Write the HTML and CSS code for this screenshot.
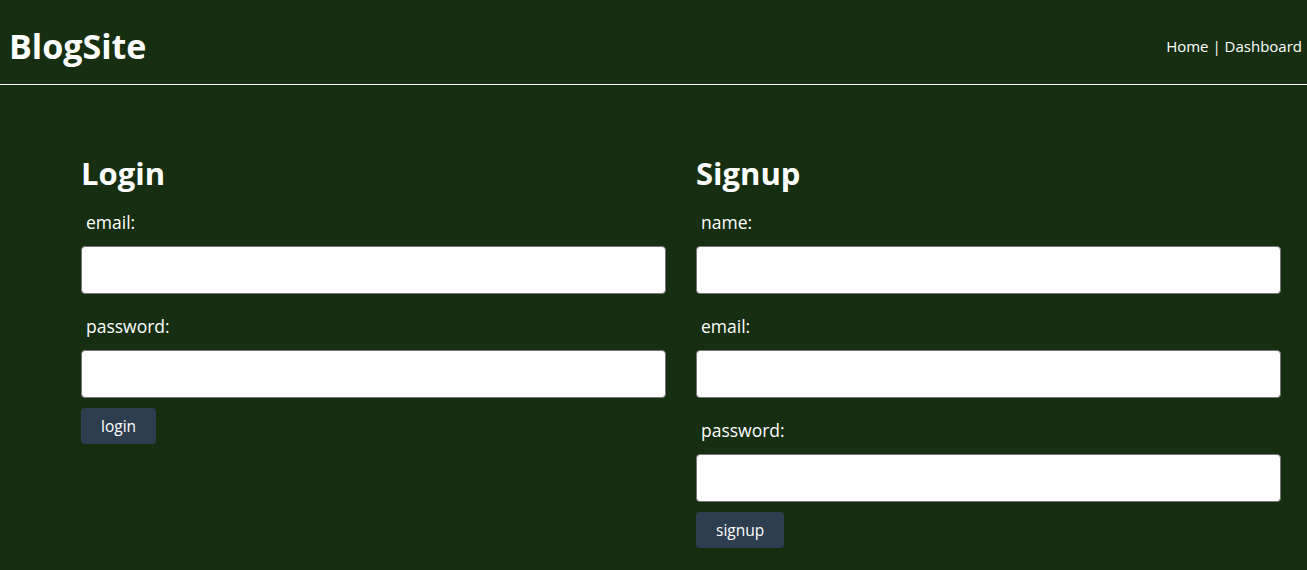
FILE: index.html
```html
<!DOCTYPE html>
<html>
<head>
<meta charset="utf-8">
<link rel="stylesheet" href="styles.css">
</head>
<body>
<header class="site-header">
  <h1 class="brand">BlogSite</h1>
  <nav class="nav"><a href="#">Home</a> | <a href="#">Dashboard</a></nav>
</header>
<main class="forms">
  <section class="panel">
    <h2 class="panel-title">Login</h2>
    <label class="field-label">email:</label>
    <input class="field-input" type="text">
    <label class="field-label">password:</label>
    <input class="field-input" type="password">
    <button class="btn">login</button>
  </section>
  <section class="panel">
    <h2 class="panel-title">Signup</h2>
    <label class="field-label">name:</label>
    <input class="field-input" type="text">
    <label class="field-label">email:</label>
    <input class="field-input" type="text">
    <label class="field-label">password:</label>
    <input class="field-input" type="password">
    <button class="btn">signup</button>
  </section>
</main>
</body>
</html>
```

FILE: styles.css
```css
html, body {
  margin: 0;
  padding: 0;
  background: #152f10;
  color: #ffffff;
  font-family: "Open Sans", "Noto Sans", sans-serif;
}
.site-header {
  box-sizing: border-box;
  display: flex;
  justify-content: space-between;
  align-items: center;
  height: 85px;
  padding: 8px 5px 0 9px;
  border-bottom: 1px solid #ffffff;
}
.brand {
  margin: 0;
  font-size: 34px;
  font-weight: 700;
  line-height: 40px;
}
.nav {
  font-size: 15px;
}
.nav a {
  color: #ffffff;
  text-decoration: none;
}
.forms {
  display: grid;
  grid-template-columns: 585px 585px;
  column-gap: 30px;
  padding: 68px 0 0 81px;
}
.panel {
  display: flex;
  flex-direction: column;
  align-items: flex-start;
}
.panel-title {
  margin: 0 0 16px 0;
  font-size: 31px;
  font-weight: 700;
  line-height: 40px;
}
.field-label {
  margin: 0 0 11px 5px;
  font-size: 17.5px;
  line-height: 26px;
}
.field-input {
  box-sizing: border-box;
  width: 100%;
  height: 48px;
  margin: 0 0 19px 0;
  border: 1px solid #767676;
  border-radius: 4px;
  background: #ffffff;
}
.field-input + .btn {
  margin-top: -9px;
}
.btn {
  height: 36px;
  padding: 0 20px;
  border: none;
  border-radius: 4px;
  background: #2c3e50;
  color: #ffffff;
  font-family: inherit;
  font-size: 15.5px;
}
```
